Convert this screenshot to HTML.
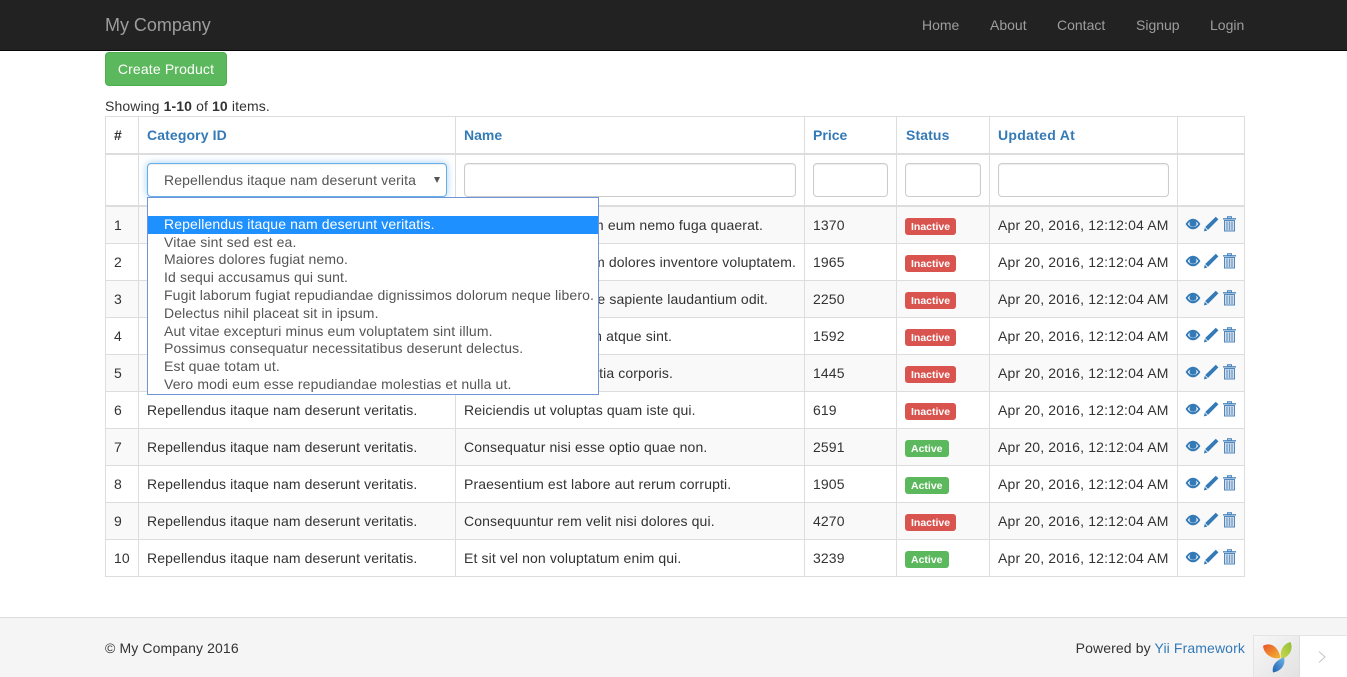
<!DOCTYPE html>
<html lang="en">
<head>
<meta charset="utf-8">
<title>Products</title>
<style>
*{box-sizing:border-box}
html,body{margin:0;padding:0;width:1347px;height:677px;overflow:hidden;background:#fff}
body{font-family:"Liberation Sans",Arial,sans-serif;font-size:14px;line-height:20px;color:#333;position:relative;letter-spacing:.12px}
a{color:#337ab7;text-decoration:none}
.nav{position:absolute;left:0;top:0;width:1347px;height:51px;background:#222;border-bottom:1px solid #080808;letter-spacing:0}
.nav a{position:absolute;top:15px;color:#9d9d9d;line-height:20px}
.nav a.brand{font-size:18px;left:105px;letter-spacing:-.03px}
.btn{position:absolute;left:105px;top:52px;width:122px;height:34px;background:#5cb85c;border:1px solid #4cae4c;border-radius:4px;color:#fff;text-align:center;line-height:32px;letter-spacing:.15px}
.summary{position:absolute;left:105px;top:96px}
table{position:absolute;left:105px;top:116px;width:1139px;border-collapse:collapse;table-layout:fixed;border:1px solid #ddd}
th,td{border:1px solid #ddd;padding:8px;line-height:20px;text-align:left;vertical-align:top;white-space:nowrap}
thead th{border-bottom:2px solid #ddd;font-weight:bold;letter-spacing:.12px}
thead th:nth-child(6){letter-spacing:.3px}
thead th:nth-child(3),thead th:nth-child(4){letter-spacing:.02px}
thead tr.f td{border-bottom:2px solid #ddd;height:52px}
tbody tr{height:37px}
tbody tr:nth-child(odd) td{background:#f9f9f9}
tbody td:nth-child(6){letter-spacing:.16px}
td.n{position:relative}
td.n span{position:absolute;top:8px}
.in{display:block;height:34px;border:1px solid #ccc;border-radius:4px;background:#fff;box-shadow:inset 0 1px 1px rgba(0,0,0,.075)}
.sel{position:absolute;left:147px;top:163px;width:300px;height:34px;border:1px solid #66afe9;border-radius:4px;background:#fff;box-shadow:inset 0 1px 1px rgba(0,0,0,.075),0 0 8px rgba(102,175,233,.6);color:#555;line-height:32px;padding-left:16px;overflow:hidden;z-index:3}
.sel b{display:block;width:252px;overflow:hidden;white-space:nowrap;font-weight:normal}
.sel i{position:absolute;left:286px;top:13px;width:0;height:0;border-left:3.5px solid transparent;border-right:3.5px solid transparent;border-top:6px solid #555}
.drop{position:absolute;left:147px;top:197px;width:452px;height:198px;border:1px solid #7196d8;background:#fff;color:#555;z-index:4;overflow:hidden;white-space:nowrap;letter-spacing:.125px}
.drop div{position:absolute;left:0;width:450px;height:18px;line-height:16px;padding-left:16px}
.drop .s{background:#1e90ff;color:#fff}
.lb{display:inline-block;height:17px;line-height:16px;padding:1px 6px 0;font-size:10.5px;font-weight:bold;color:#fff;border-radius:3px;vertical-align:top;margin-top:3px;letter-spacing:0}
.r{background:#d9534f}.g{background:#5cb85c}
td.a{padding:0;position:relative}
td.a svg{position:absolute;left:7px;top:9px}
.foot{position:absolute;left:0;top:617px;width:1347px;height:60px;background:#f5f5f5;border-top:1px solid #ddd}
.foot .l{position:absolute;left:105px;top:20px}
.foot .p{position:absolute;right:102px;top:20px}
.dbg{position:absolute;left:1253px;top:635px;width:94px;height:42px;background:#fff;border:1px solid #e4e4e4;border-bottom:0;border-right:0;z-index:5}
.dbg .lg{position:absolute;left:0;top:0;width:46px;height:42px;background:linear-gradient(135deg,#f7f7f7,#e2e2e2);border-right:1px solid #ddd}
</style>
</head>
<body>
<svg width="0" height="0" style="position:absolute">
<defs>
<symbol id="ac" viewBox="0 0 54 18">
<g fill="#337ab7">
<path fill-rule="evenodd" d="M.6 8C2.800 4.400 5.400 2.700 8 2.700s5.200 1.700 7.400 5.300c-2.200 3.600-4.800 5.300-7.400 5.300S2.800 11.600.6 8ZM2.800 8C4 9.800 6 11.100 8 11.100S12 9.800 13.200 8C12.500 6.900 11.600 6 10.600 5.400 11.200 6.100 11.500 7 11.500 7.800c0 1.900-1.500 3-3.500 3S4.500 9.700 4.500 7.800C4.500 7 4.800 6.100 5.400 5.400 4.400 6 3.500 6.900 2.800 8Z"/>
<circle cx="7.500" cy="7" r="2"/>
<path d="M30.800 .8 33.400 3.400 23 13.900 20.200 11ZM19.800 11.800 22.400 14.500 18.900 15.400Z"/>
</g>
<rect x="38" y="2.200" width="13" height="1.300" fill="#3f7fba"/>
<rect x="42.500" y=".7" width="4" height="1.500" fill="none" stroke="#4f88c0" stroke-width="1"/>
<path d="M39.500 4.500h10v10.500h-10Z" fill="#d3deea" stroke="#4f88c0" stroke-width="1"/>
<path d="M42 5.500v8.500M44.500 5.500v8.500M47 5.500v8.500" stroke="#6c99c6" stroke-width="1.200"/>
</symbol>
</defs>
</svg>

<div class="nav">
<a class="brand" href="#">My Company</a>
<a href="#" style="left:922px">Home</a>
<a href="#" style="left:990px">About</a>
<a href="#" style="left:1057px">Contact</a>
<a href="#" style="left:1136px">Signup</a>
<a href="#" style="left:1210px">Login</a>
</div>

<a class="btn" href="#">Create Product</a>
<div class="summary">Showing <b>1-10</b> of <b>10</b> items.</div>

<table>
<colgroup><col style="width:33px"><col style="width:317px"><col style="width:349px"><col style="width:92px"><col style="width:93px"><col style="width:188px"><col style="width:67px"></colgroup>
<thead>
<tr><th>#</th><th><a href="#">Category ID</a></th><th><a href="#">Name</a></th><th><a href="#">Price</a></th><th style="padding-left:9px"><a href="#">Status</a></th><th><a href="#">Updated At</a></th><th></th></tr>
<tr class="f"><td></td><td></td><td><span class="in"></span></td><td><span class="in"></span></td><td><span class="in"></span></td><td><span class="in"></span></td><td></td></tr>
</thead>
<tbody>
<tr><td>1</td><td>Repellendus itaque nam deserunt veritatis.</td><td class="n"><span style="right:41px">Quia voluptatibus dolorem eum nemo fuga quaerat.</span></td><td>1370</td><td><span class="lb r">Inactive</span></td><td>Apr 20, 2016, 12:12:04 AM</td><td class="a"><svg width="54" height="18"><use href="#ac"/></svg></td></tr>
<tr><td>2</td><td>Repellendus itaque nam deserunt veritatis.</td><td class="n"><span style="right:8px">Nostrum dolorem harum dolores inventore voluptatem.</span></td><td>1965</td><td><span class="lb r">Inactive</span></td><td>Apr 20, 2016, 12:12:04 AM</td><td class="a"><svg width="54" height="18"><use href="#ac"/></svg></td></tr>
<tr><td>3</td><td>Repellendus itaque nam deserunt veritatis.</td><td class="n"><span style="right:36px">Quisquam vitae dolore sapiente laudantium odit.</span></td><td>2250</td><td><span class="lb r">Inactive</span></td><td>Apr 20, 2016, 12:12:04 AM</td><td class="a"><svg width="54" height="18"><use href="#ac"/></svg></td></tr>
<tr><td>4</td><td>Repellendus itaque nam deserunt veritatis.</td><td class="n"><span style="right:132px">Sed voluptatem harum atque sint.</span></td><td>1592</td><td><span class="lb r">Inactive</span></td><td>Apr 20, 2016, 12:12:04 AM</td><td class="a"><svg width="54" height="18"><use href="#ac"/></svg></td></tr>
<tr><td>5</td><td>Repellendus itaque nam deserunt veritatis.</td><td class="n"><span style="right:131px">Nisi quia dolor molestia corporis.</span></td><td>1445</td><td><span class="lb r">Inactive</span></td><td>Apr 20, 2016, 12:12:04 AM</td><td class="a"><svg width="54" height="18"><use href="#ac"/></svg></td></tr>
<tr><td>6</td><td>Repellendus itaque nam deserunt veritatis.</td><td>Reiciendis ut voluptas quam iste qui.</td><td>619</td><td><span class="lb r">Inactive</span></td><td>Apr 20, 2016, 12:12:04 AM</td><td class="a"><svg width="54" height="18"><use href="#ac"/></svg></td></tr>
<tr><td>7</td><td>Repellendus itaque nam deserunt veritatis.</td><td>Consequatur nisi esse optio quae non.</td><td>2591</td><td><span class="lb g">Active</span></td><td>Apr 20, 2016, 12:12:04 AM</td><td class="a"><svg width="54" height="18"><use href="#ac"/></svg></td></tr>
<tr><td>8</td><td>Repellendus itaque nam deserunt veritatis.</td><td>Praesentium est labore aut rerum corrupti.</td><td>1905</td><td><span class="lb g">Active</span></td><td>Apr 20, 2016, 12:12:04 AM</td><td class="a"><svg width="54" height="18"><use href="#ac"/></svg></td></tr>
<tr><td>9</td><td>Repellendus itaque nam deserunt veritatis.</td><td>Consequuntur rem velit nisi dolores qui.</td><td>4270</td><td><span class="lb r">Inactive</span></td><td>Apr 20, 2016, 12:12:04 AM</td><td class="a"><svg width="54" height="18"><use href="#ac"/></svg></td></tr>
<tr><td>10</td><td>Repellendus itaque nam deserunt veritatis.</td><td>Et sit vel non voluptatum enim qui.</td><td>3239</td><td><span class="lb g">Active</span></td><td>Apr 20, 2016, 12:12:04 AM</td><td class="a"><svg width="54" height="18"><use href="#ac"/></svg></td></tr>
</tbody>
</table>

<div class="sel"><b>Repellendus itaque nam deserunt veritatis.</b><i></i></div>
<div class="drop">
<div class="s" style="top:18px">Repellendus itaque nam deserunt veritatis.</div>
<div style="top:36px">Vitae sint sed est ea.</div>
<div style="top:53px">Maiores dolores fugiat nemo.</div>
<div style="top:71px">Id sequi accusamus qui sunt.</div>
<div style="top:89px">Fugit laborum fugiat repudiandae dignissimos dolorum neque libero.</div>
<div style="top:107px">Delectus nihil placeat sit in ipsum.</div>
<div style="top:125px">Aut vitae excepturi minus eum voluptatem sint illum.</div>
<div style="top:142px">Possimus consequatur necessitatibus deserunt delectus.</div>
<div style="top:160px">Est quae totam ut.</div>
<div style="top:178px">Vero modi eum esse repudiandae molestias et nulla ut.</div>
</div>

<div class="foot">
<div class="l">© My Company 2016</div>
<div class="p">Powered by <a href="#">Yii Framework</a></div>
</div>

<div class="dbg">
<div class="lg">
<svg width="46" height="42" viewBox="0 0 46 42">
<defs>
<linearGradient id="o" x1="0" y1="0" x2="1" y2="1"><stop offset="0" stop-color="#e8542a"/><stop offset="1" stop-color="#f2b632"/></linearGradient>
<linearGradient id="v" x1="1" y1="0" x2="0" y2="1"><stop offset="0" stop-color="#8fbf3a"/><stop offset="1" stop-color="#cfd84a"/></linearGradient>
<linearGradient id="u" x1="1" y1="0" x2="0" y2="1"><stop offset="0" stop-color="#6fb4e6"/><stop offset="1" stop-color="#1f5fb0"/></linearGradient>
</defs>
<path d="M9 10C15 6 24 9 26.500 22C19 23.500 10 19 9 10Z" fill="url(#o)"/>
<path d="M36.500 6C39.500 13 36 20 27.500 23.500C25 15 29 8 36.500 6Z" fill="url(#v)"/>
<path d="M30 21.500C32 29 27 35 19 36.500C17.500 30 22 24 30 21.500Z" fill="url(#u)"/>
</svg>
</div>
<svg width="12" height="14" viewBox="0 0 12 14" style="position:absolute;left:63px;top:14px"><path d="M2 1.500 8 7 2 12.500" fill="none" stroke="#c4c4c4" stroke-width="1"/></svg>
</div>
</body>
</html>
